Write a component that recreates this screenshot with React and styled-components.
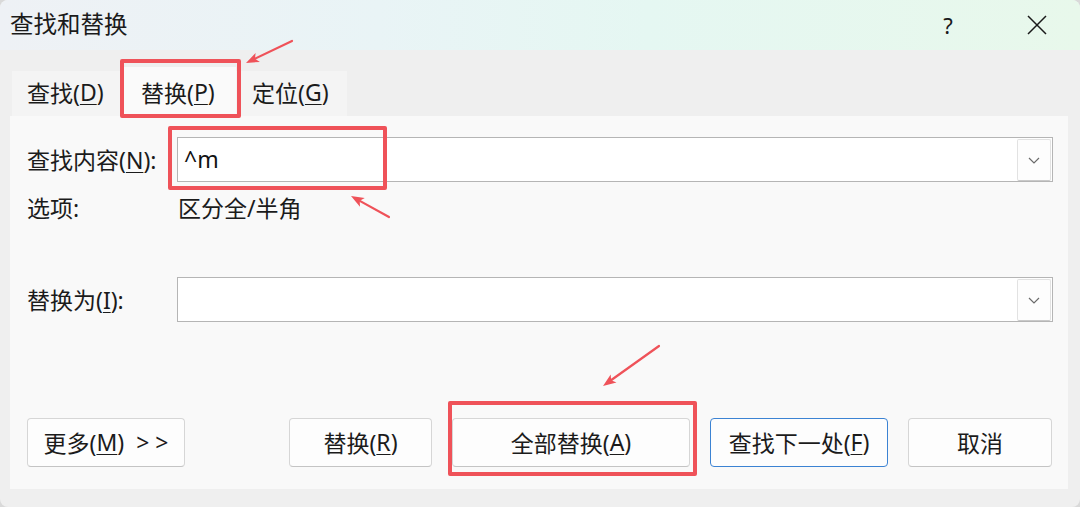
import React from "react";
import styled, { createGlobalStyle } from "styled-components";

const GlobalStyle = createGlobalStyle`
  html, body { margin: 0; padding: 0; background: #d9d9d9; }
  body { font-family: "Noto Sans", "Noto Sans CJK SC", sans-serif; color: #1b1b1b; }
  #root { width: 1080px; height: 507px; }
`;

const FONT = `"Noto Sans", "Noto Sans CJK SC", sans-serif`;
const RED = "#ef5259";

const Window = styled.div`
  position: relative;
  width: 1080px;
  height: 507px;
  background: #efefef;
  border-radius: 8px;
  overflow: hidden;
  display: flex;
  flex-direction: column;
  font-family: ${FONT};
`;

const TitleBar = styled.div`
  height: 50px;
  flex: none;
  display: flex;
  align-items: center;
  padding-left: 10px;
  background: linear-gradient(90deg, #eef1f5 0%, #e9f4f6 35%, #e5f7f2 60%, #e8f8eb 100%);
`;

const Title = styled.div`
  font-size: 23.5px;
  line-height: 30px;
  margin-top: -3px;
  flex: 1;
`;

const TitleButton = styled.div`
  width: 46px;
  height: 50px;
  display: flex;
  align-items: center;
  justify-content: center;
  font-size: 22px;
  color: #1a1a1a;
  margin-right: ${(p) => p.$mr || 0}px;
`;

const Body = styled.div`
  flex: 1;
  display: flex;
  flex-direction: column;
  padding: 21px 12px 18px 10px;
`;

const TabStrip = styled.div`
  height: 45px;
  margin-left: 2px;
  align-self: flex-start;
  display: flex;
  align-items: stretch;
  background: #f4f4f4;
`;

const Tab = styled.div`
  position: relative;
  width: ${(p) => p.$w}px;
  box-sizing: border-box;
  display: flex;
  align-items: center;
  padding-left: ${(p) => p.$pl}px;
  padding-bottom: 3px;
  font-size: 23px;
  color: #1b1b1b;
  white-space: nowrap;
  background: ${(p) => (p.$active ? "#fafafa" : "transparent")};
  margin-top: ${(p) => (p.$active ? -4 : 0)}px;
  padding-top: ${(p) => (p.$active ? 4 : 0)}px;
  u { text-decoration-thickness: 1px; text-underline-offset: 3px; }
`;

const Panel = styled.div`
  flex: none;
  height: 373px;
  box-sizing: border-box;
  background: #f9f9f9;
  padding: 21px 15px 22px 17px;
  display: flex;
  flex-direction: column;
`;

const FieldRow = styled.div`
  display: grid;
  grid-template-columns: 150px 1fr;
  align-items: center;
  margin-top: ${(p) => p.$mt || 0}px;
`;

const Label = styled.div`
  font-size: 23px;
  line-height: 28px;
  white-space: nowrap;
  u { text-decoration-thickness: 1px; text-underline-offset: 3px; }
`;

const Combo = styled.div`
  position: relative;
  height: 45px;
  box-sizing: border-box;
  border: 1px solid #b5b5b5;
  background: #ffffff;
  display: flex;
  align-items: stretch;
`;

const ComboText = styled.div`
  flex: 1;
  display: flex;
  align-items: center;
  padding-left: 6px;
  padding-bottom: 2px;
  font-size: 23px;
  color: #111;
`;

const DropButton = styled.div`
  width: 32px;
  margin: 1px 1px 0 0;
  border: 1px solid #e2e2e2;
  border-bottom-color: #c9c9c9;
  border-radius: 2px;
  background: #fdfdfd;
  display: flex;
  align-items: center;
  justify-content: center;
`;

const OptionValue = styled.div`
  font-size: 23px;
  line-height: 28px;
  padding-left: 1px;
`;

const ButtonRow = styled.div`
  display: flex;
  align-items: stretch;
  gap: 20px;
  margin-top: 96px;
  height: 49px;
`;

const Spacer = styled.div`
  flex: 1;
`;

const Button = styled.div`
  position: relative;
  width: ${(p) => p.$w}px;
  box-sizing: border-box;
  display: flex;
  align-items: center;
  justify-content: center;
  font-size: 23px;
  padding-bottom: 2px;
  background: #fdfdfd;
  border: 1px solid ${(p) => (p.$default ? "#3c83d3" : "#d6d6d6")};
  border-bottom-color: ${(p) => (p.$default ? "#3c83d3" : "#c4c4c4")};
  border-radius: 4px;
  margin-right: ${(p) => p.$mr || 0}px;
  white-space: nowrap;
  u { text-decoration-thickness: 1px; text-underline-offset: 3px; }
`;

const Overlay = styled.div`
  position: absolute;
  inset: 0;
  pointer-events: none;
`;

const Highlight = styled.div`
  position: absolute;
  left: ${(p) => p.$x}px;
  top: ${(p) => p.$y}px;
  width: ${(p) => p.$w}px;
  height: ${(p) => p.$h}px;
  box-sizing: border-box;
  border: 4px solid ${RED};
  border-radius: 2px;
`;

const ArrowLayer = styled.svg`
  position: absolute;
  left: 0;
  top: 0;
`;

function Chevron() {
  return (
    <svg width="12" height="7" viewBox="0 0 12 7">
      <path d="M1 1 L6 6 L11 1" fill="none" stroke="#6b6b6b" strokeWidth="1.2" />
    </svg>
  );
}

function Arrow({ x1, y1, x2, y2 }) {
  const dx = x2 - x1;
  const dy = y2 - y1;
  const len = Math.hypot(dx, dy);
  const ux = dx / len;
  const uy = dy / len;
  const hl = 13;
  const hw = 5;
  const bx = x2 - ux * hl;
  const by = y2 - uy * hl;
  const pts = `${x2},${y2} ${bx - uy * hw},${by + ux * hw} ${bx + ux * 3},${by + uy * 3} ${bx + uy * hw},${by - ux * hw}`;
  return (
    <g>
      <line x1={x1} y1={y1} x2={bx + ux * 4} y2={by + uy * 4} stroke={RED} strokeWidth="2.2" strokeLinecap="round" />
      <polygon points={pts} fill={RED} />
    </g>
  );
}

export default function App() {
  return (
    <>
      <GlobalStyle />
      <Window>
        <TitleBar>
          <Title>查找和替换</Title>
          <TitleButton $mr={43}>?</TitleButton>
          <TitleButton $mr={20}>
            <svg width="20" height="20" viewBox="0 0 20 20">
              <path d="M1 1 L19 19 M19 1 L1 19" stroke="#1a1a1a" strokeWidth="1.5" fill="none" />
            </svg>
          </TitleButton>
        </TitleBar>
        <Body>
          <TabStrip>
            <Tab $w={112} $pl={15}>查找(<u>D</u>)</Tab>
            <Tab $w={112} $pl={17} $active>替换(<u>P</u>)</Tab>
            <Tab $w={111} $pl={16}>定位(<u>G</u>)</Tab>
          </TabStrip>
          <Panel>
            <FieldRow>
              <Label>查找内容(<u>N</u>):</Label>
              <Combo>
                <ComboText>^m</ComboText>
                <DropButton><Chevron /></DropButton>
              </Combo>
            </FieldRow>
            <FieldRow $mt={12}>
              <Label>选项:</Label>
              <OptionValue>区分全/半角</OptionValue>
            </FieldRow>
            <FieldRow $mt={55}>
              <Label>替换为(<u>I</u>):</Label>
              <Combo>
                <ComboText />
                <DropButton><Chevron /></DropButton>
              </Combo>
            </FieldRow>
            <ButtonRow>
              <Button $w={158}>更多(<u>M</u>)&nbsp;&nbsp;&gt;&nbsp;&gt;</Button>
              <Spacer />
              <Button $w={143}>替换(<u>R</u>)</Button>
              <Button $w={238}>全部替换(<u>A</u>)</Button>
              <Button $w={178} $default>查找下一处(<u>F</u>)</Button>
              <Button $w={144} $mr={1}>取消</Button>
            </ButtonRow>
          </Panel>
        </Body>
        <Overlay>
          <Highlight $x={120} $y={59} $w={121} $h={59} />
          <Highlight $x={168} $y={126} $w={219} $h={64} />
          <Highlight $x={448} $y={401} $w={249} $h={75} />
          <ArrowLayer width="1080" height="507" viewBox="0 0 1080 507">
            <Arrow x1={292} y1={41} x2={246} y2={63} />
            <Arrow x1={389} y1={217} x2={351} y2={196} />
            <Arrow x1={659} y1={346} x2={603} y2={386} />
          </ArrowLayer>
        </Overlay>
      </Window>
    </>
  );
}
